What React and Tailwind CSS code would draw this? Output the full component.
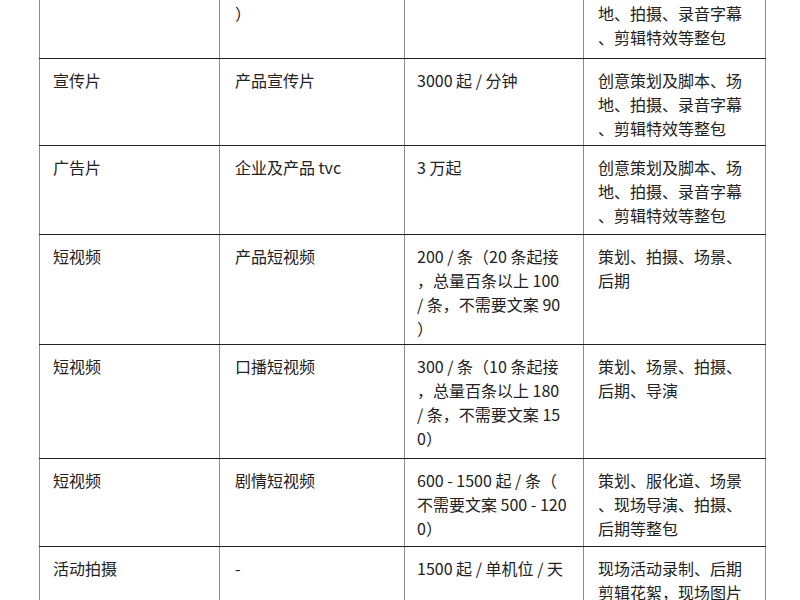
import React from 'react';

const pkg = ['创意策划及脚本、场', '地、拍摄、录音字幕', '、剪辑特效等整包'];

const rows = [
  { h: 'h-[91px]', type: ['企业片'], name: ['企业形象片（含航拍等', '）'], price: ['3000 起 / 分钟'], desc: pkg },
  { h: 'h-[87px]', type: ['宣传片'], name: ['产品宣传片'], price: ['3000 起 / 分钟'], desc: pkg },
  { h: 'h-[89px]', type: ['广告片'], name: ['企业及产品 tvc'], price: ['3 万起'], desc: pkg },
  {
    h: 'h-[110px]', type: ['短视频'], name: ['产品短视频'],
    price: ['200 / 条（20 条起接', '，总量百条以上 100', '/ 条，不需要文案 90', '）'],
    desc: ['策划、拍摄、场景、', '后期'],
  },
  {
    h: 'h-[114px]', type: ['短视频'], name: ['口播短视频'],
    price: ['300 / 条（10 条起接', '，总量百条以上 180', '/ 条，不需要文案 15', '0）'],
    desc: ['策划、场景、拍摄、', '后期、导演'],
  },
  {
    h: 'h-[88px]', type: ['短视频'], name: ['剧情短视频'],
    price: ['600 - 1500 起 / 条（', '不需要文案 500 - 120', '0）'],
    desc: ['策划、服化道、场景', '、现场导演、拍摄、', '后期等整包'],
  },
  {
    h: 'h-[100px]', type: ['活动拍摄'], name: ['-'], price: ['1500 起 / 单机位 / 天'],
    desc: ['现场活动录制、后期', '剪辑花絮，现场图片', '拍摄等'],
  },
];

function Cell({ lines, className }) {
  return (
    <div className={'border-l border-[#8c8c8c] pt-[9px] ' + className}>
      {lines.map((l, i) => (
        <div key={i} className="whitespace-pre leading-[24px]">{l}</div>
      ))}
    </div>
  );
}

export default function App() {
  return (
    <div className="w-[800px] h-[600px] overflow-hidden bg-white text-[16px] text-[#222]"
      style={{ fontFamily: '"Noto Sans CJK SC", "Noto Sans", sans-serif' }}>
      <div className="-mt-[32px] ml-[39px] w-[727px]">
        {rows.map((r, i) => (
          <div key={i} className={'grid grid-cols-[180px_185px_179px_183px] border-b border-[#222] ' + r.h}>
            <Cell lines={r.type} className="pl-[13px]" />
            <Cell lines={r.name} className="pl-[15px]" />
            <Cell lines={r.price} className="pl-[12px]" />
            <Cell lines={r.desc} className="pl-[14px] border-r" />
          </div>
        ))}
      </div>
    </div>
  );
}
